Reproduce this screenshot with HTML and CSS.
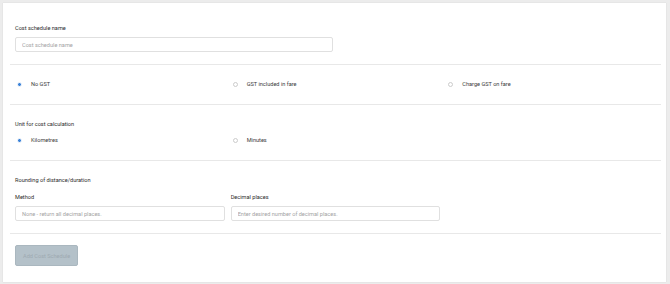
FILE: index.html
```html
<!DOCTYPE html>
<html lang="en">
<head>
  <meta charset="UTF-8" />
  <meta name="viewport" content="width=device-width, initial-scale=1.0"/>
  <title>Cost Schedule</title>
  <link rel="stylesheet" href="styles.css">
</head>
<body>
<div class="card">
  <div class="section first">
    <label class="label" for="name">Cost schedule name</label>
    <div class="grid halves">
      <input id="name" type="text" placeholder="Cost schedule name">
    </div>
  </div>

  <div class="section">
    <div class="grid thirds">
      <label class="option"><input type="radio" name="gst" checked> No GST</label>
      <label class="option"><input type="radio" name="gst"> GST included in fare</label>
      <label class="option"><input type="radio" name="gst"> Charge GST on fare</label>
    </div>
  </div>

  <div class="section">
    <div class="label heading">Unit for cost calculation</div>
    <div class="grid thirds">
      <label class="option"><input type="radio" name="unit" checked> Kilometres</label>
      <label class="option"><input type="radio" name="unit"> Minutes</label>
    </div>
  </div>

  <div class="section">
    <div class="label heading-lg">Rounding of distance/duration</div>
    <div class="grid thirds">
      <div class="field">
        <label class="label">Method</label>
        <input type="text" placeholder="None - return all decimal places.">
      </div>
      <div class="field">
        <label class="label">Decimal places</label>
        <input type="text" placeholder="Enter desired number of decimal places.">
      </div>
    </div>
  </div>

  <div class="section last">
    <button disabled>Add Cost Schedule</button>
  </div>
</div>
</body>
</html>
```

FILE: styles.css
```css
body {
  margin: 0;
  padding: 3px 4px 2px 3px;
  background-color: #ececec;
  font-family: Roboto, "Liberation Sans", Arial, sans-serif;
  font-size: 5.6px;
  color: #333;
}

.card {
  background-color: #fff;
  height: 279px;
  padding: 0 5px 0 7px;
  box-sizing: border-box;
  box-shadow: 0 0 1px rgba(0, 0, 0, 0.15);
}

.section {
  padding: 15px 5px 16px;
  border-bottom: 1px solid #e8e8e8;
}

.section.first {
  padding-top: 21px;
  padding-bottom: 12px;
}

.section:nth-child(4) {
  padding-bottom: 12px;
}

.section.last {
  border-bottom: none;
  padding-top: 11px;
}

.label {
  display: block;
  line-height: 8px;
  margin-bottom: 5px;
  color: #2b2b2b;
}

.heading {
  margin-bottom: 8px;
}

.heading-lg {
  margin-bottom: 9px;
}

.grid {
  display: grid;
  gap: 6px;
}

.halves {
  grid-template-columns: 1fr 1fr;
}

.thirds {
  grid-template-columns: 1fr 1fr 1fr;
}

input[type="text"] {
  display: block;
  width: 100%;
  height: 15px;
  box-sizing: border-box;
  border: 1px solid #e0e0e0;
  border-radius: 2px;
  padding: 0 6px;
  font-family: inherit;
  font-size: 5.6px;
  color: #333;
  outline: none;
}

input::placeholder {
  color: #a3a3a3;
}

.option {
  display: flex;
  align-items: center;
  line-height: 8px;
  color: #3a3a3a;
}

.option input {
  appearance: none;
  width: 5px;
  height: 5px;
  margin: 0 9px 0 2px;
  border: 1px solid #cccccc;
  border-radius: 50%;
  box-sizing: border-box;
}

.option input:checked {
  border: 1px solid #e3edf9;
  background: radial-gradient(circle, #3a82d8 0, #3a82d8 1.4px, #cfe0f4 1.8px);
}

button {
  height: 21px;
  padding: 0 7px;
  border: 1px solid #aab7bf;
  border-radius: 2px;
  background-color: #b4c1c9;
  color: #9ea9b1;
  font-family: inherit;
  font-size: 5.6px;
}
```
